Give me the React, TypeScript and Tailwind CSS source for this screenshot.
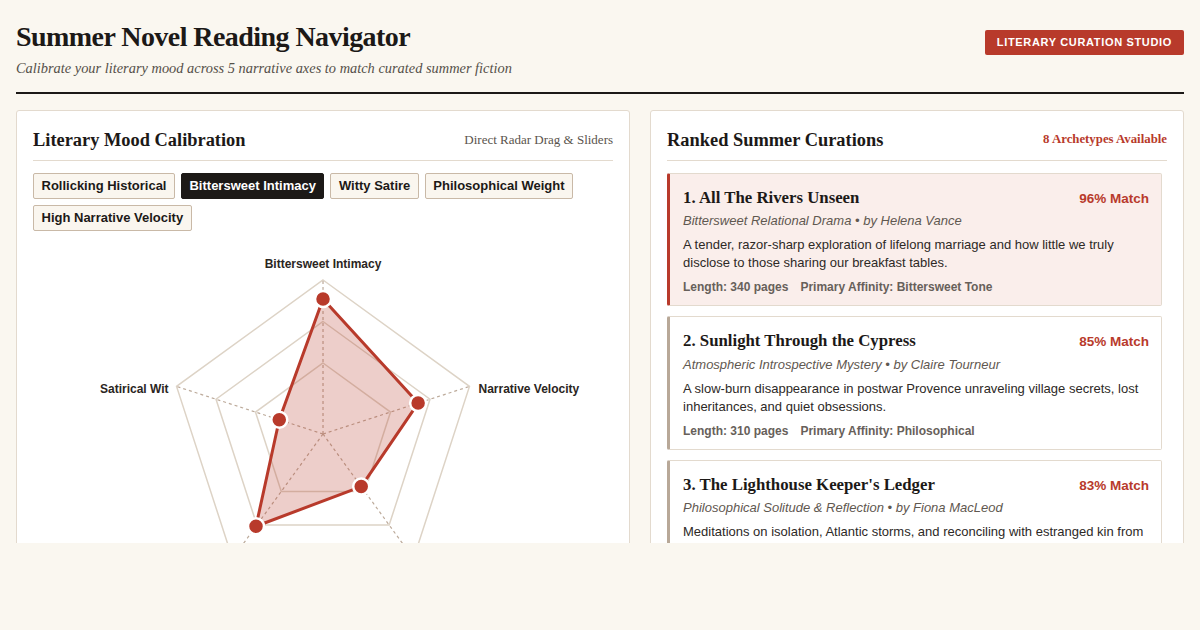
import React from 'react';

const serif = "font-['Liberation_Serif','Times_New_Roman',serif]";
const sans = "font-['Liberation_Sans',Arial,sans-serif]";

const presets = [
  { label: 'Rollicking Historical', active: false },
  { label: 'Bittersweet Intimacy', active: true },
  { label: 'Witty Satire', active: false },
  { label: 'Philosophical Weight', active: false },
  { label: 'High Narrative Velocity', active: false },
];

// axes clockwise from the top; r is the plotted radius in px (outer ring = 154)
const axes = [
  { name: 'Bittersweet Intimacy', r: 135 },
  { name: 'Narrative Velocity', r: 100 },
  { name: 'Philosophical Weight', r: 65 },
  { name: 'Historical Texture', r: 114 },
  { name: 'Satirical Wit', r: 46 },
];

const curations = [
  {
    rank: 1,
    title: 'All The Rivers Unseen',
    match: 96,
    genre: 'Bittersweet Relational Drama',
    author: 'Helena Vance',
    blurb:
      'A tender, razor-sharp exploration of lifelong marriage and how little we truly disclose to those sharing our breakfast tables.',
    pages: 340,
    affinity: 'Bittersweet Tone',
  },
  {
    rank: 2,
    title: 'Sunlight Through the Cypress',
    match: 85,
    genre: 'Atmospheric Introspective Mystery',
    author: 'Claire Tourneur',
    blurb:
      'A slow-burn disappearance in postwar Provence unraveling village secrets, lost inheritances, and quiet obsessions.',
    pages: 310,
    affinity: 'Philosophical',
  },
  {
    rank: 3,
    title: "The Lighthouse Keeper's Ledger",
    match: 83,
    genre: 'Philosophical Solitude & Reflection',
    author: 'Fiona MacLeod',
    blurb:
      'Meditations on isolation, Atlantic storms, and reconciling with estranged kin from the far edge of the Hebrides.',
    pages: 288,
    affinity: 'Philosophical',
  },
];

const CX = 290;
const CY = 191;
const R = 154;

function pt(i: number, r: number) {
  const a = ((-90 + i * 72) * Math.PI) / 180;
  return [CX + r * Math.cos(a), CY + r * Math.sin(a)];
}

function ring(r: number) {
  return axes.map((_, i) => pt(i, r).join(',')).join(' ');
}

function Radar() {
  const shape = axes.map((a, i) => pt(i, a.r).join(',')).join(' ');
  const labelPos = [
    { x: CX, y: CY - R - 15, anchor: 'middle' },
    { x: pt(1, R)[0] + 9, y: pt(1, R)[1] + 3, anchor: 'start' },
    { x: pt(2, R)[0] + 4, y: pt(2, R)[1] + 18, anchor: 'middle' },
    { x: pt(3, R)[0] - 4, y: pt(3, R)[1] + 18, anchor: 'middle' },
    { x: pt(4, R)[0] - 8, y: pt(4, R)[1] + 3, anchor: 'end' },
  ];

  return (
    <svg viewBox="0 0 580 420" className="mt-3 w-full h-[420px]">
      {[71, 112.5, 154].map((r) => (
        <polygon key={r} points={ring(r)} fill="none" stroke="#ddd3c6" strokeWidth={1.5} />
      ))}
      {axes.map((_, i) => {
        const [x, y] = pt(i, R);
        return (
          <line key={i} x1={CX} y1={CY} x2={x} y2={y} stroke="#bcaa9a" strokeWidth={1.2} strokeDasharray="3 3" />
        );
      })}
      <polygon
        points={shape}
        fill="rgba(184,58,43,0.25)"
        stroke="#b83a2b"
        strokeWidth={3}
        strokeLinejoin="round"
      />
      {axes.map((a, i) => {
        const [x, y] = pt(i, a.r);
        return <circle key={i} cx={x} cy={y} r={8} fill="#b83a2b" stroke="#ffffff" strokeWidth={2.5} />;
      })}
      {axes.map((a, i) => (
        <text
          key={a.name}
          x={labelPos[i].x}
          y={labelPos[i].y}
          textAnchor={labelPos[i].anchor as 'start' | 'middle' | 'end'}
          dominantBaseline="middle"
          fontFamily="'Liberation Sans', Arial, sans-serif"
          fontSize={12}
          fontWeight={700}
          fill="#2a2522"
        >
          {a.name}
        </text>
      ))}
    </svg>
  );
}

export default function App() {
  return (
    <div className="h-[630px] bg-[#faf7f0] text-[#1c1917]">
      <div className="h-[543px] overflow-hidden px-4">
        {/* Header */}
        <header className="flex items-start justify-between pt-5 pb-3.5 border-b-2 border-[#1c1917]">
          <div>
            <h1 className={`${serif} text-[28px] leading-[34px] font-bold tracking-[-0.02em]`}>
              Summer Novel Reading Navigator
            </h1>
            <p className={`${serif} italic text-[14.4px] leading-5 mt-1 text-[#555049]`}>
              Calibrate your literary mood across 5 narrative axes to match curated summer fiction
            </p>
          </div>
          <div
            className={`${sans} mt-[10px] bg-[#b83a2b] text-white text-[11px] leading-[13px] font-bold uppercase tracking-[0.06em] px-3 py-1.5 rounded-[2px]`}
          >
            Literary Curation Studio
          </div>
        </header>

        {/* Panels */}
        <div className="grid grid-cols-[1.15fr_1fr] gap-5 mt-4">
          {/* Calibration */}
          <section className="bg-white border border-[#e3dace] rounded-[3px] px-4 pt-4">
            <div className="flex items-center justify-between pb-[7px] border-b border-[#e3dace]">
              <h2 className={`${serif} text-[18.4px] leading-[26px] font-bold`}>Literary Mood Calibration</h2>
              <span className={`${serif} text-[13px] text-[#5a544d]`}>Direct Radar Drag &amp; Sliders</span>
            </div>
            <div className="flex flex-wrap gap-1.5 mt-3">
              {presets.map((p) => (
                <button
                  key={p.label}
                  className={`${sans} h-[26px] px-[7.5px] text-[13px] font-bold rounded-[2px] border ${
                    p.active
                      ? 'bg-[#1c1917] border-[#1c1917] text-white'
                      : 'bg-[#faf6ef] border-[#c9b9a7] text-[#1c1917]'
                  }`}
                >
                  {p.label}
                </button>
              ))}
            </div>
            <Radar />
          </section>

          {/* Curations */}
          <section className="bg-white border border-[#e3dace] rounded-[3px] px-4 pt-4">
            <div className="flex items-center justify-between pb-[7px] border-b border-[#e3dace]">
              <h2 className={`${serif} text-[18.4px] leading-[26px] font-bold`}>Ranked Summer Curations</h2>
              <span className={`${serif} text-[12.8px] font-bold text-[#b83a2b]`}>8 Archetypes Available</span>
            </div>
            <div className="flex flex-col gap-[10px] mt-3 pr-[5px]">
              {curations.map((c) => (
                <article
                  key={c.rank}
                  className={`border border-[#e3dace] border-l-[3px] rounded-[2px] pl-[13px] pr-3 pt-[13px] pb-[9px] ${
                    c.rank === 1 ? 'bg-[#faeeeb] border-l-[#b83a2b]' : 'bg-white border-l-[#b8a898]'
                  }`}
                >
                  <div className="flex items-baseline justify-between">
                    <h3 className={`${serif} text-[16.8px] leading-[22px] font-bold`}>
                      {c.rank}. {c.title}
                    </h3>
                    <span className={`${sans} text-[13.5px] font-bold text-[#b83a2b]`}>{c.match}% Match</span>
                  </div>
                  <p className={`${sans} italic text-[13px] leading-[18px] mt-[3px] text-[#5f5850]`}>
                    {c.genre} • by {c.author}
                  </p>
                  <p className={`${sans} text-[13px] leading-[18px] mt-1.5 text-[#2d2926]`}>{c.blurb}</p>
                  <div className={`${sans} flex gap-3 text-[12px] leading-[18px] font-bold mt-1.5 text-[#67605a]`}>
                    <span>Length: {c.pages} pages</span>
                    <span>Primary Affinity: {c.affinity}</span>
                  </div>
                </article>
              ))}
            </div>
          </section>
        </div>
      </div>
    </div>
  );
}
